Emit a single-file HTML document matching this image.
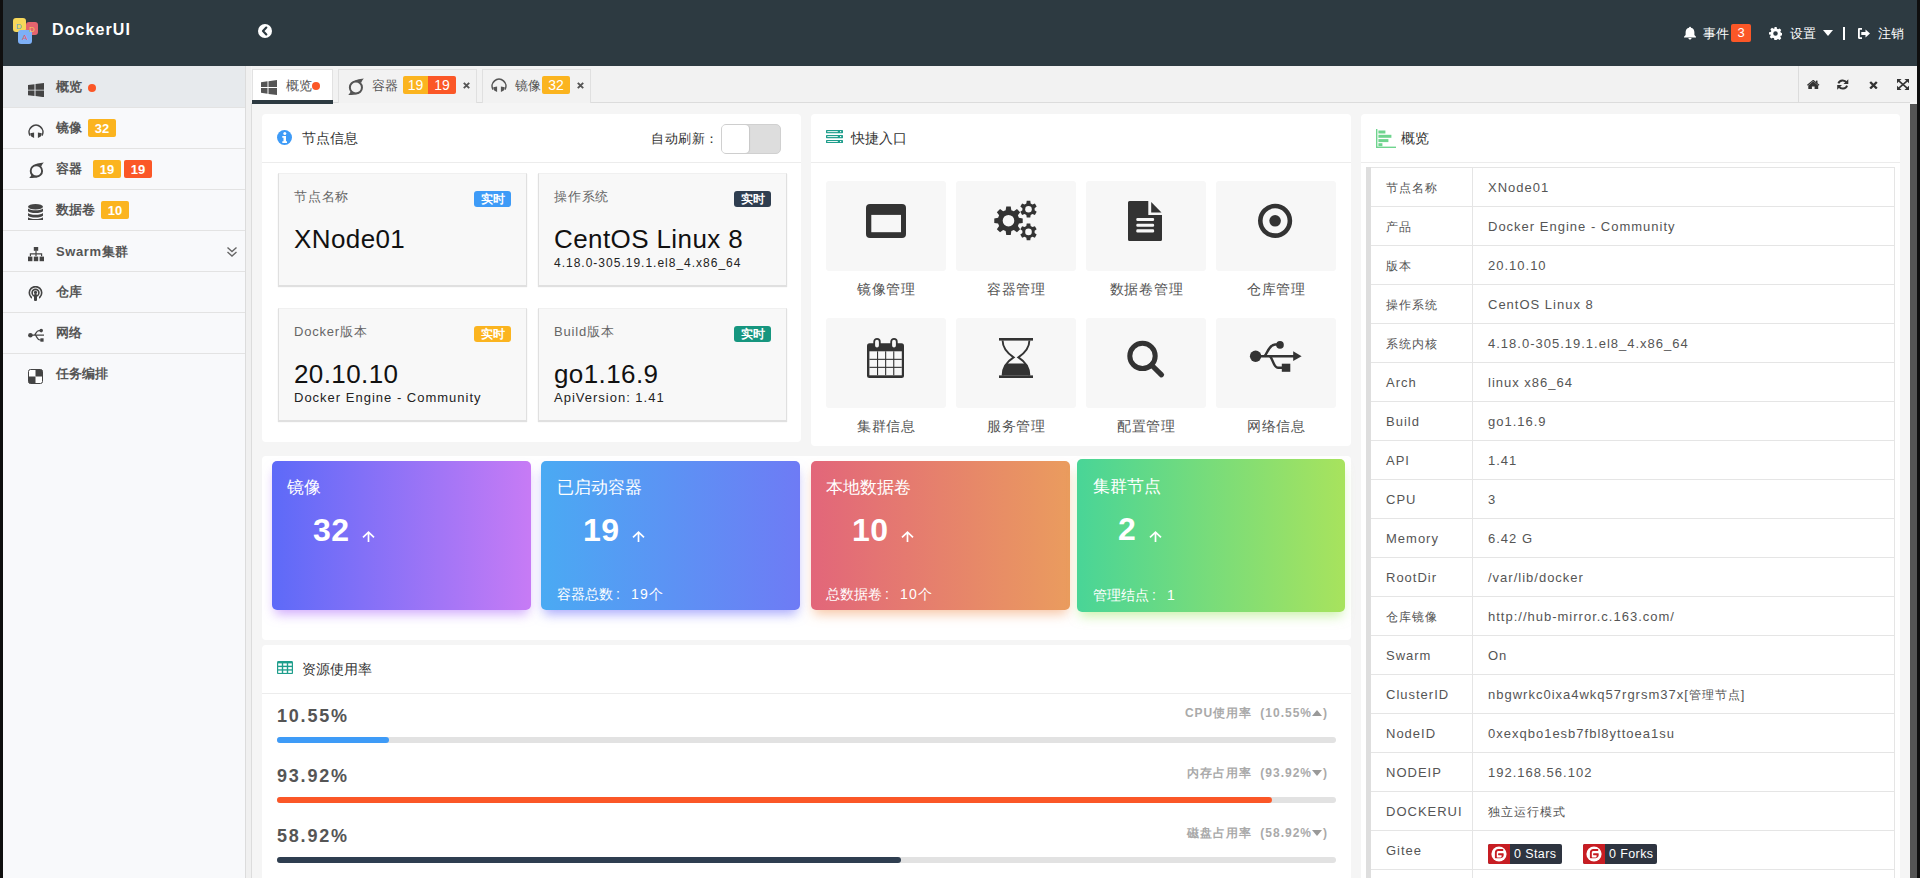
<!DOCTYPE html>
<html><head><meta charset="utf-8"><title>DockerUI</title>
<style>
*{box-sizing:border-box;margin:0;padding:0}
html,body{width:1920px;height:878px;overflow:hidden;background:#f5f5f5;font-family:"Liberation Sans",sans-serif;color:#333}
.a{position:absolute}
.t{position:absolute;white-space:nowrap}
.bd{position:absolute;color:#fff;font-weight:bold;text-align:center;border-radius:2px;font-family:"Liberation Sans",sans-serif}
</style></head><body>

<div class="a" style="left:0px;top:0px;width:3px;height:878px;background:#0f0f0f"></div>
<div class="a" style="left:1917px;top:0px;width:3px;height:878px;background:#0f0f0f"></div>
<div class="a" style="left:3px;top:0px;width:1914px;height:66px;background:#2d3a41"></div>
<div class="a" style="left:13px;top:18px;width:13px;height:14px;background:#f6d75a;border-radius:3px"></div>
<div class="a" style="left:26px;top:22px;width:12px;height:13px;background:#e5646e;border-radius:3px"></div>
<div class="a" style="left:18px;top:30px;width:14px;height:14px;background:#7db0f7;border-radius:3px"></div>
<div class="t " style="left:16px;top:22.70px;font-size:8px;line-height:8px;color:#5aa0c8;font-weight:normal;letter-spacing:0px;">D</div>
<div class="t " style="left:29px;top:26.20px;font-size:8px;line-height:8px;color:#f3cf5a;font-weight:normal;letter-spacing:0px;">D</div>
<div class="t " style="left:22px;top:34.20px;font-size:8px;line-height:8px;color:#e0606a;font-weight:normal;letter-spacing:0px;">A</div>
<div class="t " style="left:52px;top:21.90px;font-size:16px;line-height:16px;color:#fff;font-weight:bold;letter-spacing:1.1px;">DockerUI</div>
<svg class="a" style="left:258px;top:24px;" width="14" height="14" viewBox="0 0 14 14" preserveAspectRatio="none"><circle cx="7" cy="7" r="7" fill="#fff"/><path d="M8.3 3.6 L5 7 L8.3 10.4" stroke="#2d3a41" stroke-width="2.2" fill="none" stroke-linecap="round" stroke-linejoin="round"/></svg>
<svg class="a" style="left:1683px;top:26px;" width="14" height="14" viewBox="0 0 14 14" preserveAspectRatio="none"><path d="M7 0.8c.6 0 1 .4 1 .9 2.2.4 3.4 2.2 3.4 4.6v2.6l1.6 1.8v.9H1v-.9l1.6-1.8V6.3C2.6 3.9 3.8 2.1 6 1.7c0-.5.4-.9 1-.9z M5.4 12.1h3.2c0 .9-.7 1.5-1.6 1.5s-1.6-.6-1.6-1.5z" fill="#fff"/></svg>
<div class="t " style="left:1703px;top:26.95px;font-size:13px;line-height:13px;color:#fff;font-weight:normal;letter-spacing:0px;">事件</div>
<div class="bd" style="left:1731px;top:24px;width:20px;height:18px;line-height:18px;font-size:13px;font-weight:normal;background:#fb5727">3</div>
<svg class="a" style="left:1769px;top:27px;" width="13" height="13" viewBox="0 0 16 16" preserveAspectRatio="none"><path fill="#fff" d="M6.6 0h2.8l.4 2.2c.5.2 1 .4 1.4.7l1.9-1.2 2 2-1.2 1.9c.3.4.5.9.7 1.4l2.2.4v2.8l-2.2.4c-.2.5-.4 1-.7 1.4l1.2 1.9-2 2-1.9-1.2c-.4.3-.9.5-1.4.7L9.4 16H6.6l-.4-2.2c-.5-.2-1-.4-1.4-.7l-1.9 1.2-2-2 1.2-1.9c-.3-.4-.5-.9-.7-1.4L0 9.4V6.6l2.2-.4c.2-.5.4-1 .7-1.4L1.7 2.9l2-2 1.9 1.2c.4-.3.9-.5 1.4-.7zM8 5.2A2.8 2.8 0 1 0 8 10.8 2.8 2.8 0 1 0 8 5.2z"/></svg>
<div class="t " style="left:1790px;top:26.95px;font-size:13px;line-height:13px;color:#fff;font-weight:normal;letter-spacing:0px;">设置</div>
<svg class="a" style="left:1823px;top:30px;" width="10" height="6" viewBox="0 0 10 6" preserveAspectRatio="none"><path d="M0 0h10L5 6z" fill="#fff"/></svg>
<div class="a" style="left:1843px;top:27px;width:2px;height:13px;background:#fff"></div>
<svg class="a" style="left:1857px;top:27px;" width="14" height="13" viewBox="0 0 14 13" preserveAspectRatio="none"><path fill="#fff" d="M5 1H2.2C1.5 1 1 1.5 1 2.2v8.6c0 .7.5 1.2 1.2 1.2H5v-1.8H2.8V2.8H5z M8.5 2.5v2.6H4.3v2.8h4.2v2.6L13 6.5z"/></svg>
<div class="t " style="left:1878px;top:26.95px;font-size:13px;line-height:13px;color:#fff;font-weight:normal;letter-spacing:0px;">注销</div>
<div class="a" style="left:3px;top:66px;width:242px;height:812px;background:#f8f9fb"></div>
<div class="a" style="left:245px;top:66px;width:1px;height:812px;background:#dcdcdc"></div>
<div class="a" style="left:246px;top:66px;width:5px;height:812px;background:#f0f0f0"></div>
<div class="a" style="left:251px;top:103px;width:1px;height:775px;background:#dcdcdc"></div>
<div class="a" style="left:3px;top:66px;width:242px;height:41px;background:#e7eaed"></div>
<div class="a" style="left:3px;top:107px;width:242px;height:1px;background:#e3e3e3"></div>
<div class="a" style="left:3px;top:148px;width:242px;height:1px;background:#e3e3e3"></div>
<div class="a" style="left:3px;top:189px;width:242px;height:1px;background:#e3e3e3"></div>
<div class="a" style="left:3px;top:230px;width:242px;height:1px;background:#e3e3e3"></div>
<div class="a" style="left:3px;top:271px;width:242px;height:1px;background:#e3e3e3"></div>
<div class="a" style="left:3px;top:312px;width:242px;height:1px;background:#e3e3e3"></div>
<div class="a" style="left:3px;top:353px;width:242px;height:1px;background:#e3e3e3"></div>
<svg class="a" style="left:28px;top:82.5px;" width="16" height="14.2" viewBox="0 0 16 16" preserveAspectRatio="none"><path fill="#444" d="M0 2.3L6.5 1.4V7.5H0z M7.5 1.2L16 0V7.5H7.5z M0 8.5H6.5V14.6L0 13.7z M7.5 8.5H16V16L7.5 14.8z"/></svg>
<div class="t " style="left:56px;top:81.38px;font-size:12.5px;line-height:12.5px;color:#555;font-weight:bold;letter-spacing:0px;">概览</div>
<div class="a" style="left:88px;top:84px;width:8px;height:8px;background:#fb5727;border-radius:50%"></div>
<svg class="a" style="left:28px;top:122.5px;" width="16" height="16" viewBox="0 0 16 16" preserveAspectRatio="none"><path fill="none" stroke="#444" stroke-width="1.6" d="M2.1 12.6 A6.9 6.9 0 1 1 13.9 12.6"/><path fill="#444" d="M2.2 10.2 L6.1 9.4 L6.1 15 L3.2 13.6z M13.8 10.2 L9.9 9.4 L9.9 15 L12.8 13.6z"/></svg>
<div class="t " style="left:56px;top:122.38px;font-size:12.5px;line-height:12.5px;color:#555;font-weight:bold;letter-spacing:0px;">镜像</div>
<div class="bd" style="left:88px;top:119px;width:28px;height:18px;line-height:19px;font-size:13px;background:#fbb41f">32</div>
<svg class="a" style="left:28px;top:162px;" width="16" height="16" viewBox="0 0 16 16" preserveAspectRatio="none"><ellipse cx="8.4" cy="8.9" rx="5.7" ry="5.6" fill="none" stroke="#444" stroke-width="1.9"/><path d="M4.6 4.6 C7 1.6 11.5 0.9 15.8 0.5 C14.8 1.6 13.8 3 13.2 4.6 C11.5 3 8.5 2.6 4.6 4.6z" fill="#444"/><path d="M12.2 13.2 C9.8 16 5.2 16.1 1.2 16 C2.2 15 3 13.8 3.6 12.4 C5.6 14.4 9 14.6 12.2 13.2z" fill="#444"/></svg>
<div class="t " style="left:56px;top:163.38px;font-size:12.5px;line-height:12.5px;color:#555;font-weight:bold;letter-spacing:0px;">容器</div>
<div class="bd" style="left:93px;top:160px;width:28px;height:18px;line-height:19px;font-size:13px;background:#fbb41f">19</div>
<div class="bd" style="left:124px;top:160px;width:28px;height:18px;line-height:19px;font-size:13px;background:#fb5727">19</div>
<svg class="a" style="left:28px;top:204px;" width="15" height="16" viewBox="0 0 15 16" preserveAspectRatio="none"><ellipse cx="7.5" cy="2.8" rx="7.5" ry="2.8" fill="#444"/><path d="M0 4.4c1 1.2 4 1.8 7.5 1.8s6.5-.6 7.5-1.8v2.9c-1 1.2-4 1.8-7.5 1.8S1 8.5 0 7.3z" fill="#444"/><path d="M0 8.9c1 1.2 4 1.8 7.5 1.8s6.5-.6 7.5-1.8v2.9c-1 1.2-4 1.8-7.5 1.8S1 13 0 11.8z" fill="#444"/><path d="M0 13.2c1 1.2 4 1.8 7.5 1.8s6.5-.6 7.5-1.8V16H0z" fill="#444"/></svg>
<div class="t " style="left:56px;top:204.38px;font-size:12.5px;line-height:12.5px;color:#555;font-weight:bold;letter-spacing:0px;">数据卷</div>
<div class="bd" style="left:101px;top:201px;width:28px;height:18px;line-height:19px;font-size:13px;background:#fbb41f">10</div>
<svg class="a" style="left:28px;top:247px;" width="16" height="15" viewBox="0 0 16 15" preserveAspectRatio="none"><rect x="5.8" y="0" width="4.4" height="3.8" fill="#444"/><path d="M7.4 3.8h1.2v2.4h5.6v3h-1.2V7.4H8.6v1.8H7.4V7.4H3v1.8H1.8v-3h5.6z" fill="#444"/><rect x="0" y="9.6" width="4.4" height="4.6" fill="#444"/><rect x="5.8" y="9.6" width="4.4" height="4.6" fill="#444"/><rect x="11.6" y="9.6" width="4.4" height="4.6" fill="#444"/></svg>
<div class="t " style="left:56px;top:244.95px;font-size:13px;line-height:13px;color:#555;font-weight:bold;letter-spacing:0.6px;">Swarm<span style="font-size:12.5px">集群</span></div>
<svg class="a" style="left:226px;top:246px;" width="12" height="12" viewBox="0 0 12 12" preserveAspectRatio="none"><path d="M1.5 1.5L6 5.5L10.5 1.5 M1.5 6L6 10L10.5 6" stroke="#666" stroke-width="1.4" fill="none"/></svg>
<svg class="a" style="left:28px;top:286px;" width="15" height="15" viewBox="0 0 15 15" preserveAspectRatio="none"><circle cx="7.5" cy="6.8" r="6.2" fill="none" stroke="#444" stroke-width="1.6"/><circle cx="7.5" cy="6.8" r="3.4" fill="none" stroke="#444" stroke-width="1.6"/><circle cx="7.5" cy="6.4" r="1.6" fill="#444"/><rect x="6.2" y="8" width="2.6" height="7" rx="1" fill="#444"/><rect x="4" y="11" width="7" height="4" fill="#f8f9fb"/><rect x="6" y="8.5" width="3" height="6.5" rx="1" fill="#444"/></svg>
<div class="t " style="left:56px;top:286.38px;font-size:12.5px;line-height:12.5px;color:#555;font-weight:bold;letter-spacing:0px;">仓库</div>
<svg class="a" style="left:28px;top:328px;" width="16" height="14" viewBox="0 0 16 14" preserveAspectRatio="none"><circle cx="2.4" cy="7.2" r="2.3" fill="#444"/><path d="M4 7.2H16 M6.5 7.2C8 5.5 8.5 2.6 11 2.6H12.5 M7.5 7.2C9 9 9.5 12 12 12H13" stroke="#444" stroke-width="1.2" fill="none"/><circle cx="13.2" cy="2.6" r="1.8" fill="#444"/><rect x="12.4" y="10.3" width="3.2" height="3.4" fill="#444"/></svg>
<div class="t " style="left:56px;top:327.38px;font-size:12.5px;line-height:12.5px;color:#555;font-weight:bold;letter-spacing:0px;">网络</div>
<svg class="a" style="left:28px;top:369px;" width="15" height="15" viewBox="0 0 15 15" preserveAspectRatio="none"><rect x="0.5" y="0.5" width="14" height="14" rx="2" fill="#fff" stroke="#444" stroke-width="1"/><path d="M7.5 0.5H12.5a2 2 0 0 1 2 2V7.5H7.5z" fill="#444"/><path d="M0.5 7.5H7.5V14.5H2.5a2 2 0 0 1-2-2z" fill="#444"/></svg>
<div class="t " style="left:56px;top:368.38px;font-size:12.5px;line-height:12.5px;color:#555;font-weight:bold;letter-spacing:0px;">任务编排</div>
<div class="a" style="left:252px;top:66px;width:1665px;height:36px;background:#f2f2f2"></div>
<div class="a" style="left:252px;top:102px;width:1658px;height:1px;background:#dcdcdc"></div>
<div class="a" style="left:252px;top:69px;width:81px;height:34px;background:#fff;border:1px solid #e2e2e2;border-bottom:none"></div>
<div class="a" style="left:252px;top:100px;width:81px;height:4px;background:#2d3a41"></div>
<svg class="a" style="left:261px;top:80px;" width="16" height="15" viewBox="0 0 16 16" preserveAspectRatio="none"><path fill="#555" d="M0 2.3L6.5 1.4V7.5H0z M7.5 1.2L16 0V7.5H7.5z M0 8.5H6.5V14.6L0 13.7z M7.5 8.5H16V16L7.5 14.8z"/></svg>
<div class="t " style="left:286px;top:78.95px;font-size:13px;line-height:13px;color:#555;font-weight:normal;letter-spacing:0px;">概览</div>
<div class="a" style="left:312px;top:82px;width:8px;height:8px;background:#fb5727;border-radius:50%"></div>
<div class="a" style="left:338px;top:69px;width:139px;height:34px;background:#f2f2f2;border:1px solid #e0e0e0;border-bottom:none"></div>
<svg class="a" style="left:347px;top:77.5px;" width="17" height="17" viewBox="0 0 16 16" preserveAspectRatio="none"><ellipse cx="8.4" cy="8.9" rx="5.7" ry="5.6" fill="none" stroke="#555" stroke-width="1.9"/><path d="M4.6 4.6 C7 1.6 11.5 0.9 15.8 0.5 C14.8 1.6 13.8 3 13.2 4.6 C11.5 3 8.5 2.6 4.6 4.6z" fill="#555"/><path d="M12.2 13.2 C9.8 16 5.2 16.1 1.2 16 C2.2 15 3 13.8 3.6 12.4 C5.6 14.4 9 14.6 12.2 13.2z" fill="#555"/></svg>
<div class="t " style="left:372px;top:78.75px;font-size:13px;line-height:13px;color:#555;font-weight:normal;letter-spacing:0px;">容器</div>
<div class="bd" style="left:403px;top:76px;width:25px;height:18px;line-height:18px;font-size:14px;font-weight:normal;border-radius:2px 0 0 2px;background:#fbb41f">19</div>
<div class="bd" style="left:428px;top:76px;width:28px;height:18px;line-height:18px;font-size:14px;font-weight:normal;border-radius:0 2px 2px 0;background:#fb5727">19</div>
<svg class="a" style="left:462.5px;top:81.5px;" width="7" height="7" viewBox="0 0 7 7" preserveAspectRatio="none"><path d="M0.8 0.8L6.2 6.2M6.2 0.8L0.8 6.2" stroke="#555" stroke-width="1.9"/></svg>
<div class="a" style="left:482px;top:69px;width:109px;height:34px;background:#f2f2f2;border:1px solid #e0e0e0;border-bottom:none"></div>
<svg class="a" style="left:491px;top:77px;" width="16" height="16" viewBox="0 0 16 16" preserveAspectRatio="none"><path fill="none" stroke="#555" stroke-width="1.6" d="M2.1 12.6 A6.9 6.9 0 1 1 13.9 12.6"/><path fill="#555" d="M2.2 10.2 L6.1 9.4 L6.1 15 L3.2 13.6z M13.8 10.2 L9.9 9.4 L9.9 15 L12.8 13.6z"/></svg>
<div class="t " style="left:515px;top:78.75px;font-size:13px;line-height:13px;color:#555;font-weight:normal;letter-spacing:0px;">镜像</div>
<div class="bd" style="left:542px;top:76px;width:28px;height:18px;line-height:18px;font-size:14px;font-weight:normal;background:#fbb41f">32</div>
<svg class="a" style="left:576.5px;top:81.5px;" width="7" height="7" viewBox="0 0 7 7" preserveAspectRatio="none"><path d="M0.8 0.8L6.2 6.2M6.2 0.8L0.8 6.2" stroke="#555" stroke-width="1.9"/></svg>
<div class="a" style="left:1798px;top:66px;width:1px;height:37px;background:#dcdcdc"></div>
<svg class="a" style="left:1807px;top:79.5px;" width="12.5" height="9.5" viewBox="0 0 12.5 9.5" preserveAspectRatio="none"><path fill="#333" d="M6.25 1.2L11.2 5.4V9.5H7.6V6.6H4.9V9.5H1.3V5.4z"/><path d="M0.4 5.2L6.25 0.4L12.1 5.2" stroke="#333" stroke-width="1.1" fill="none"/><rect x="9" y="0.6" width="1.5" height="2.6" fill="#333"/></svg>
<svg class="a" style="left:1837px;top:79px;" width="11.5" height="11" viewBox="0 0 11.5 11" preserveAspectRatio="none"><path d="M9.6 3.6A4.6 4.6 0 0 0 1.4 4.4 M1.9 7.4A4.6 4.6 0 0 0 10.1 6.6" stroke="#333" stroke-width="1.9" fill="none"/><path d="M11.3 0.2V5H6.5z M0.2 10.8V6H5z" fill="#333"/></svg>
<svg class="a" style="left:1868.5px;top:80.5px;" width="9" height="8.5" viewBox="0 0 9 8.5" preserveAspectRatio="none"><path d="M1.2 1L7.8 7.5M7.8 1L1.2 7.5" stroke="#333" stroke-width="2.4"/></svg>
<svg class="a" style="left:1896.5px;top:79px;" width="12" height="11" viewBox="0 0 12 11" preserveAspectRatio="none"><path d="M1.8 1.8L10.2 9.2M10.2 1.8L1.8 9.2" stroke="#333" stroke-width="1.6"/><path d="M0 0H4.6L0 4.2z M12 0V4.2L7.4 0z M0 11V6.8L4.6 11z M12 11H7.4L12 6.8z" fill="#333"/></svg>
<div class="a" style="left:1910px;top:104px;width:7px;height:774px;background:#555"></div>
<div class="a" style="left:262px;top:114px;width:539px;height:328px;background:#fff;border-radius:4px"></div>
<div class="a" style="left:262px;top:162px;width:539px;height:1px;background:#ececec"></div>
<svg class="a" style="left:277px;top:130px;" width="15" height="15" viewBox="0 0 15 15" preserveAspectRatio="none"><circle cx="7.5" cy="7.5" r="7.5" fill="#3e9bf7"/><circle cx="7.8" cy="3.6" r="1.5" fill="#fff"/><path d="M5.3 6.1H9v5.2h1v1.6H5.3v-1.6h1.2V7.7H5.3z" fill="#fff"/></svg>
<div class="t " style="left:302px;top:131.10px;font-size:14px;line-height:14px;color:#333;font-weight:normal;letter-spacing:0px;">节点信息</div>
<div class="t " style="left:651px;top:131.95px;font-size:13px;line-height:13px;color:#333;font-weight:normal;letter-spacing:0.5px;">自动刷新：</div>
<div class="a" style="left:721px;top:124px;width:60px;height:30px;background:#ddd;border:1px solid #d0d0d0;border-radius:5px"></div>
<div class="a" style="left:722px;top:125px;width:27px;height:28px;background:#fff;border-radius:4px;box-shadow:1px 0 1px rgba(0,0,0,.1)"></div>
<div class="a" style="left:278px;top:173px;width:249px;height:113px;background:#f8f8f8;border:1px solid #e0e0e0;border-top-color:#f0f0f0;box-shadow:0 1px 1px rgba(0,0,0,.12)"></div>
<div class="t " style="left:294px;top:189.95px;font-size:13px;line-height:13px;color:#666;font-weight:normal;letter-spacing:0.8px;">节点名称</div>
<div class="bd" style="left:474px;top:191px;width:37px;height:16px;line-height:16px;font-size:12px;background:#3e9bf7;border-radius:3px">实时</div>
<div class="t " style="left:294px;top:225.90px;font-size:26px;line-height:26px;color:#111;font-weight:normal;letter-spacing:0.4px;">XNode01</div>
<div class="a" style="left:538px;top:173px;width:249px;height:113px;background:#f8f8f8;border:1px solid #e0e0e0;border-top-color:#f0f0f0;box-shadow:0 1px 1px rgba(0,0,0,.12)"></div>
<div class="t " style="left:554px;top:189.95px;font-size:13px;line-height:13px;color:#666;font-weight:normal;letter-spacing:0.8px;">操作系统</div>
<div class="bd" style="left:734px;top:191px;width:37px;height:16px;line-height:16px;font-size:12px;background:#2f3e50;border-radius:3px">实时</div>
<div class="t " style="left:554px;top:225.90px;font-size:26px;line-height:26px;color:#111;font-weight:normal;letter-spacing:0.4px;">CentOS Linux 8</div>
<div class="t " style="left:554px;top:256.80px;font-size:12px;line-height:12px;color:#222;font-weight:normal;letter-spacing:1px;">4.18.0-305.19.1.el8_4.x86_64</div>
<div class="a" style="left:278px;top:308px;width:249px;height:113px;background:#f8f8f8;border:1px solid #e0e0e0;border-top-color:#f0f0f0;box-shadow:0 1px 1px rgba(0,0,0,.12)"></div>
<div class="t " style="left:294px;top:324.95px;font-size:13px;line-height:13px;color:#666;font-weight:normal;letter-spacing:0.8px;">Docker版本</div>
<div class="bd" style="left:474px;top:326px;width:37px;height:16px;line-height:16px;font-size:12px;background:#fbb41f;border-radius:3px">实时</div>
<div class="t " style="left:294px;top:360.90px;font-size:26px;line-height:26px;color:#111;font-weight:normal;letter-spacing:0.4px;">20.10.10</div>
<div class="t " style="left:294px;top:390.95px;font-size:13px;line-height:13px;color:#222;font-weight:normal;letter-spacing:1px;">Docker Engine - Community</div>
<div class="a" style="left:538px;top:308px;width:249px;height:113px;background:#f8f8f8;border:1px solid #e0e0e0;border-top-color:#f0f0f0;box-shadow:0 1px 1px rgba(0,0,0,.12)"></div>
<div class="t " style="left:554px;top:324.95px;font-size:13px;line-height:13px;color:#666;font-weight:normal;letter-spacing:0.8px;">Build版本</div>
<div class="bd" style="left:734px;top:326px;width:37px;height:16px;line-height:16px;font-size:12px;background:#16967f;border-radius:3px">实时</div>
<div class="t " style="left:554px;top:360.90px;font-size:26px;line-height:26px;color:#111;font-weight:normal;letter-spacing:0.4px;">go1.16.9</div>
<div class="t " style="left:554px;top:390.95px;font-size:13px;line-height:13px;color:#222;font-weight:normal;letter-spacing:1px;">ApiVersion: 1.41</div>
<div class="a" style="left:811px;top:114px;width:540px;height:332px;background:#fff;border-radius:4px"></div>
<div class="a" style="left:811px;top:162px;width:540px;height:1px;background:#ececec"></div>
<svg class="a" style="left:826px;top:130px;" width="17" height="13" viewBox="0 0 17 13" preserveAspectRatio="none"><rect x="0" y="0" width="17" height="3.2" rx="0.6" fill="#1f9e8c"/><rect x="1.3" y="1.2" width="10.5" height="0.9" fill="#fff"/><rect x="14" y="1.1" width="1.2" height="1.1" fill="#fff"/><rect x="0" y="4.95" width="17" height="3.2" rx="0.6" fill="#1f9e8c"/><rect x="1.3" y="6.15" width="10.5" height="0.9" fill="#fff"/><rect x="14" y="6.050000000000001" width="1.2" height="1.1" fill="#fff"/><rect x="0" y="9.9" width="17" height="3.2" rx="0.6" fill="#1f9e8c"/><rect x="1.3" y="11.1" width="10.5" height="0.9" fill="#fff"/><rect x="14" y="11.0" width="1.2" height="1.1" fill="#fff"/></svg>
<div class="t " style="left:851px;top:131.10px;font-size:14px;line-height:14px;color:#333;font-weight:normal;letter-spacing:0px;">快捷入口</div>
<div class="a" style="left:826px;top:181px;width:120px;height:90px;background:#f7f7f7;border-radius:3px"></div>
<div class="t" style="left:686.4px;width:400px;text-align:center;top:282.10px;font-size:14px;line-height:14px;color:#555;font-weight:normal;letter-spacing:0.75px;">镜像管理</div>
<div class="a" style="left:956px;top:181px;width:120px;height:90px;background:#f7f7f7;border-radius:3px"></div>
<div class="t" style="left:816.4px;width:400px;text-align:center;top:282.10px;font-size:14px;line-height:14px;color:#555;font-weight:normal;letter-spacing:0.75px;">容器管理</div>
<div class="a" style="left:1086px;top:181px;width:120px;height:90px;background:#f7f7f7;border-radius:3px"></div>
<div class="t" style="left:946.4000000000001px;width:400px;text-align:center;top:282.10px;font-size:14px;line-height:14px;color:#555;font-weight:normal;letter-spacing:0.75px;">数据卷管理</div>
<div class="a" style="left:1216px;top:181px;width:120px;height:90px;background:#f7f7f7;border-radius:3px"></div>
<div class="t" style="left:1076.4px;width:400px;text-align:center;top:282.10px;font-size:14px;line-height:14px;color:#555;font-weight:normal;letter-spacing:0.75px;">仓库管理</div>
<div class="a" style="left:826px;top:318px;width:120px;height:90px;background:#f7f7f7;border-radius:3px"></div>
<div class="t" style="left:686.4px;width:400px;text-align:center;top:419.10px;font-size:14px;line-height:14px;color:#555;font-weight:normal;letter-spacing:0.75px;">集群信息</div>
<div class="a" style="left:956px;top:318px;width:120px;height:90px;background:#f7f7f7;border-radius:3px"></div>
<div class="t" style="left:816.4px;width:400px;text-align:center;top:419.10px;font-size:14px;line-height:14px;color:#555;font-weight:normal;letter-spacing:0.75px;">服务管理</div>
<div class="a" style="left:1086px;top:318px;width:120px;height:90px;background:#f7f7f7;border-radius:3px"></div>
<div class="t" style="left:946.4000000000001px;width:400px;text-align:center;top:419.10px;font-size:14px;line-height:14px;color:#555;font-weight:normal;letter-spacing:0.75px;">配置管理</div>
<div class="a" style="left:1216px;top:318px;width:120px;height:90px;background:#f7f7f7;border-radius:3px"></div>
<div class="t" style="left:1076.4px;width:400px;text-align:center;top:419.10px;font-size:14px;line-height:14px;color:#555;font-weight:normal;letter-spacing:0.75px;">网络信息</div>
<svg class="a" style="left:866px;top:204px;" width="40" height="34" viewBox="0 0 40 34" preserveAspectRatio="none"><rect x="0" y="0" width="40" height="34" rx="4" fill="#333"/><rect x="5.3" y="10.9" width="29.7" height="17.3" fill="#f7f7f7"/></svg>
<svg class="a" style="left:990px;top:196px;" width="50" height="50" viewBox="0 0 50 50" preserveAspectRatio="none"><polygon points="15.65,14.28 16.25,10.48 20.75,10.48 21.35,14.28 23.85,15.32 26.96,13.05 30.15,16.24 27.88,19.35 28.92,21.85 32.72,22.45 32.72,26.95 28.92,27.55 27.88,30.05 30.15,33.16 26.96,36.35 23.85,34.08 21.35,35.12 20.75,38.92 16.25,38.92 15.65,35.12 13.15,34.08 10.04,36.35 6.85,33.16 9.12,30.05 8.08,27.55 4.28,26.95 4.28,22.45 8.08,21.85 9.12,19.35 6.85,16.24 10.04,13.05 13.15,15.32" fill="#333"/><circle cx="18.5" cy="24.7" r="5.8" fill="#f7f7f7"/><polygon points="36.34,7.39 36.71,4.79 40.29,4.79 40.66,7.39 42.45,8.42 44.89,7.45 46.68,10.54 44.61,12.17 44.61,14.23 46.68,15.86 44.89,18.95 42.45,17.98 40.66,19.01 40.29,21.61 36.71,21.61 36.34,19.01 34.55,17.98 32.11,18.95 30.32,15.86 32.39,14.23 32.39,12.17 30.32,10.54 32.11,7.45 34.55,8.42" fill="#333"/><circle cx="38.5" cy="13.2" r="3.3" fill="#f7f7f7"/><polygon points="36.34,30.09 36.71,27.49 40.29,27.49 40.66,30.09 42.45,31.12 44.89,30.15 46.68,33.24 44.61,34.87 44.61,36.93 46.68,38.56 44.89,41.65 42.45,40.68 40.66,41.71 40.29,44.31 36.71,44.31 36.34,41.71 34.55,40.68 32.11,41.65 30.32,38.56 32.39,36.93 32.39,34.87 30.32,33.24 32.11,30.15 34.55,31.12" fill="#333"/><circle cx="38.5" cy="35.9" r="3.3" fill="#f7f7f7"/></svg>
<svg class="a" style="left:1128px;top:201px;" width="34" height="40" viewBox="0 0 34 40" preserveAspectRatio="none"><path d="M0 1.5A1.5 1.5 0 0 1 1.5 0H20.3V14H34V38.5A1.5 1.5 0 0 1 32.5 40H1.5A1.5 1.5 0 0 1 0 38.5z" fill="#333"/><path d="M23.2 1L33.5 11.4H23.2z" fill="#333"/><rect x="8.3" y="16.9" width="17.8" height="3.1" rx="1.2" fill="#f7f7f7"/><rect x="8.3" y="22.7" width="17.8" height="3.1" rx="1.2" fill="#f7f7f7"/><rect x="8.3" y="28.3" width="17.8" height="3.1" rx="1.2" fill="#f7f7f7"/></svg>
<svg class="a" style="left:1257px;top:203px;" width="36" height="36" viewBox="0 0 36 36" preserveAspectRatio="none"><circle cx="18.1" cy="17.8" r="14.8" fill="none" stroke="#333" stroke-width="4.6"/><circle cx="18.1" cy="17.8" r="5.8" fill="#333"/></svg>
<svg class="a" style="left:867px;top:338px;" width="37" height="40" viewBox="0 0 37 40" preserveAspectRatio="none"><rect x="0" y="5.2" width="37" height="34.8" rx="2.5" fill="#333"/><rect x="2.4" y="13.3" width="32.4" height="24" fill="#f7f7f7"/><rect x="10.00" y="13.3" width="1.1" height="24" fill="#333"/><rect x="18.10" y="13.3" width="1.1" height="24" fill="#333"/><rect x="26.20" y="13.3" width="1.1" height="24" fill="#333"/><rect x="2.4" y="20.80" width="32.4" height="1.1" fill="#333"/><rect x="2.4" y="28.80" width="32.4" height="1.1" fill="#333"/><rect x="7.2" y="0.9" width="5.6" height="9.4" rx="2.8" fill="#f7f7f7" stroke="#333" stroke-width="1.8"/><rect x="24.2" y="0.9" width="5.6" height="9.4" rx="2.8" fill="#f7f7f7" stroke="#333" stroke-width="1.8"/></svg>
<svg class="a" style="left:999px;top:338px;" width="34" height="40" viewBox="0 0 34 40" preserveAspectRatio="none"><rect x="0" y="0" width="34" height="2.6" fill="#333"/><rect x="0" y="37.4" width="34" height="2.6" fill="#333"/><path d="M3.6 2.6C3.6 10 8 15 14.6 19.4 8 23.6 3.6 29 3.6 37.4 M30.4 2.6C30.4 10 26 15 19.4 19.4 26 23.6 30.4 29 30.4 37.4" stroke="#333" stroke-width="1.9" fill="none"/><path d="M7.4 25.6H26.6C29 28.4 30.4 32 30.4 37.4H3.6C3.6 32 5 28.4 7.4 25.6z" fill="#333"/></svg>
<svg class="a" style="left:1126px;top:340px;" width="40" height="40" viewBox="0 0 40 40" preserveAspectRatio="none"><circle cx="16.5" cy="15.9" r="12.7" fill="none" stroke="#333" stroke-width="5"/><path d="M25.5 25L35.5 34.8" stroke="#333" stroke-width="5.2" stroke-linecap="round"/></svg>
<svg class="a" style="left:1249px;top:339px;" width="54" height="34" viewBox="0 0 54 34" preserveAspectRatio="none"><circle cx="6.6" cy="17.2" r="5.7" fill="#333"/><path d="M6 17.2H45" stroke="#333" stroke-width="2.5"/><path d="M52.6 17.2L44.2 12.3V22.1z" fill="#333"/><path d="M15.5 17.2C18.5 14.5 19.5 6 26 5.6H29 M21 17.2C24 20 24.5 28.8 29 28.8H33.5" stroke="#333" stroke-width="2.5" fill="none"/><circle cx="31" cy="5.9" r="3.8" fill="#333"/><rect x="32.8" y="24.7" width="8.5" height="8.1" fill="#333"/></svg>
<div class="a" style="left:262px;top:456px;width:1089px;height:184px;background:#fff;border-radius:4px"></div>
<div class="a" style="left:272px;top:461px;width:259px;height:149px;background:linear-gradient(90deg,#5d6af8,#c77bf5);border-radius:5px;box-shadow:0 7px 12px -3px rgba(175,110,250,.6)"></div>
<div class="a" style="left:541px;top:461px;width:259px;height:149px;background:linear-gradient(90deg,#4aaaf3,#6e7bf5);border-radius:5px;box-shadow:0 7px 12px -3px rgba(110,110,250,.6)"></div>
<div class="a" style="left:811px;top:461px;width:259px;height:149px;background:linear-gradient(90deg,#e2667a,#ea9c5e);border-radius:5px;box-shadow:0 7px 12px -3px rgba(240,150,90,.55)"></div>
<div class="a" style="left:1077px;top:459px;width:268px;height:153px;background:linear-gradient(90deg,#49d597,#a8e35d);border-radius:5px;box-shadow:0 7px 12px -3px rgba(160,230,100,.55)"></div>
<div class="t " style="left:287px;top:479.48px;font-size:16.5px;line-height:16.5px;color:#fff;font-weight:normal;letter-spacing:0px;">镜像</div>
<div class="t " style="left:313px;top:514.30px;font-size:32px;line-height:32px;color:#fff;font-weight:bold;letter-spacing:0.5px;">32</div>
<svg class="a" style="left:362px;top:531px;" width="13" height="11" viewBox="0 0 13 11" preserveAspectRatio="none"><path d="M6.5 1.2V11 M1 6.4L6.5 1.2L12 6.4" stroke="#fff" stroke-width="1.7" fill="none"/></svg>
<div class="t " style="left:557px;top:479.48px;font-size:16.5px;line-height:16.5px;color:#fff;font-weight:normal;letter-spacing:0px;">已启动容器</div>
<div class="t " style="left:583px;top:514.30px;font-size:32px;line-height:32px;color:#fff;font-weight:bold;letter-spacing:0.5px;">19</div>
<svg class="a" style="left:632px;top:531px;" width="13" height="11" viewBox="0 0 13 11" preserveAspectRatio="none"><path d="M6.5 1.2V11 M1 6.4L6.5 1.2L12 6.4" stroke="#fff" stroke-width="1.7" fill="none"/></svg>
<div class="t " style="left:557px;top:587.10px;font-size:14px;line-height:14px;color:#fff;font-weight:normal;letter-spacing:0px;">容器总数<span style="display:inline-block;width:18px;padding-left:3px">:</span><span style="letter-spacing:1.3px">19个</span></div>
<div class="t " style="left:826px;top:479.48px;font-size:16.5px;line-height:16.5px;color:#fff;font-weight:normal;letter-spacing:0px;">本地数据卷</div>
<div class="t " style="left:852px;top:514.30px;font-size:32px;line-height:32px;color:#fff;font-weight:bold;letter-spacing:0.5px;">10</div>
<svg class="a" style="left:900.5px;top:531px;" width="13" height="11" viewBox="0 0 13 11" preserveAspectRatio="none"><path d="M6.5 1.2V11 M1 6.4L6.5 1.2L12 6.4" stroke="#fff" stroke-width="1.7" fill="none"/></svg>
<div class="t " style="left:826px;top:587.10px;font-size:14px;line-height:14px;color:#fff;font-weight:normal;letter-spacing:0px;">总数据卷<span style="display:inline-block;width:18px;padding-left:3px">:</span><span style="letter-spacing:1.3px">10个</span></div>
<div class="t " style="left:1093px;top:478.48px;font-size:16.5px;line-height:16.5px;color:#fff;font-weight:normal;letter-spacing:0px;">集群节点</div>
<div class="t " style="left:1118px;top:513.30px;font-size:32px;line-height:32px;color:#fff;font-weight:bold;letter-spacing:0.5px;">2</div>
<svg class="a" style="left:1148.5px;top:531px;" width="13" height="11" viewBox="0 0 13 11" preserveAspectRatio="none"><path d="M6.5 1.2V11 M1 6.4L6.5 1.2L12 6.4" stroke="#fff" stroke-width="1.7" fill="none"/></svg>
<div class="t " style="left:1093px;top:587.90px;font-size:14px;line-height:14px;color:#fff;font-weight:normal;letter-spacing:0px;">管理结点<span style="display:inline-block;width:18px;padding-left:3px">:</span><span style="letter-spacing:1.3px">1</span></div>
<div class="a" style="left:262px;top:645px;width:1089px;height:260px;background:#fff;border-radius:4px"></div>
<div class="a" style="left:262px;top:693px;width:1089px;height:1px;background:#ececec"></div>
<svg class="a" style="left:277px;top:660.6px;" width="16" height="13.2" viewBox="0 0 16 13.2" preserveAspectRatio="none"><rect x="0" y="0" width="16" height="13.2" rx="1.4" fill="#1f9e8c"/><rect x="1.2" y="2.4" width="3.6" height="2.3" fill="#fff"/><rect x="1.2" y="6.1" width="3.6" height="2.2" fill="#fff"/><rect x="1.2" y="9.6" width="3.6" height="2.3" fill="#fff"/><rect x="6.2" y="2.4" width="3.6" height="2.3" fill="#fff"/><rect x="6.2" y="6.1" width="3.6" height="2.2" fill="#fff"/><rect x="6.2" y="9.6" width="3.6" height="2.3" fill="#fff"/><rect x="11.2" y="2.4" width="3.6" height="2.3" fill="#fff"/><rect x="11.2" y="6.1" width="3.6" height="2.2" fill="#fff"/><rect x="11.2" y="9.6" width="3.6" height="2.3" fill="#fff"/></svg>
<div class="t " style="left:302px;top:662.10px;font-size:14px;line-height:14px;color:#333;font-weight:normal;letter-spacing:0px;">资源使用率</div>
<div class="t " style="left:277px;top:706.70px;font-size:18px;line-height:18px;color:#555;font-weight:bold;letter-spacing:1.8px;">10.55%</div>
<div class="t" style="right:592px;top:706.80px;font-size:12px;line-height:12px;color:#aaa;font-weight:bold;letter-spacing:1.0px;">CPU使用率<span style="display:inline-block;width:13px;text-align:right">(</span>10.55%<svg width="10" height="6" viewBox="0 0 10 6" style="margin:0 1px 1px 0"><path d="M0 6L5 0L10 6z" fill="#999"/></svg>)</div>
<div class="a" style="left:277px;top:737px;width:1059px;height:6px;background:#e2e2e2;border-radius:3px"></div>
<div class="a" style="left:277px;top:737px;width:111.7px;height:6px;background:#3e9bf7;border-radius:3px"></div>
<div class="t " style="left:277px;top:766.70px;font-size:18px;line-height:18px;color:#555;font-weight:bold;letter-spacing:1.8px;">93.92%</div>
<div class="t" style="right:592px;top:766.80px;font-size:12px;line-height:12px;color:#aaa;font-weight:bold;letter-spacing:1.0px;">内存占用率<span style="display:inline-block;width:13px;text-align:right">(</span>93.92%<svg width="10" height="6" viewBox="0 0 10 6" style="margin:0 1px 1px 0"><path d="M0 0L10 0L5 6z" fill="#999"/></svg>)</div>
<div class="a" style="left:277px;top:797px;width:1059px;height:6px;background:#e2e2e2;border-radius:3px"></div>
<div class="a" style="left:277px;top:797px;width:994.6px;height:6px;background:#fb5727;border-radius:3px"></div>
<div class="t " style="left:277px;top:826.70px;font-size:18px;line-height:18px;color:#555;font-weight:bold;letter-spacing:1.8px;">58.92%</div>
<div class="t" style="right:592px;top:826.80px;font-size:12px;line-height:12px;color:#aaa;font-weight:bold;letter-spacing:1.0px;">磁盘占用率<span style="display:inline-block;width:13px;text-align:right">(</span>58.92%<svg width="10" height="6" viewBox="0 0 10 6" style="margin:0 1px 1px 0"><path d="M0 0L10 0L5 6z" fill="#999"/></svg>)</div>
<div class="a" style="left:277px;top:857px;width:1059px;height:6px;background:#e2e2e2;border-radius:3px"></div>
<div class="a" style="left:277px;top:857px;width:624px;height:6px;background:#2f3e50;border-radius:3px"></div>
<div class="a" style="left:1361px;top:114px;width:539px;height:790px;background:#fff;border-radius:4px"></div>
<div class="a" style="left:1361px;top:162px;width:539px;height:1px;background:#ececec"></div>
<svg class="a" style="left:1376px;top:129px;" width="20" height="19" viewBox="0 0 20 19" preserveAspectRatio="none"><rect x="0" y="0" width="1.4" height="19" fill="#6fd48e"/><rect x="0" y="17.6" width="20" height="1.4" fill="#6fd48e"/><rect x="2.4" y="1.5" width="7" height="3" fill="#6fd48e"/><rect x="2.4" y="5.8" width="13" height="3" fill="#6fd48e"/><rect x="2.4" y="10.1" width="10" height="3" fill="#6fd48e"/><rect x="2.4" y="14.2" width="4" height="3" fill="#6fd48e"/></svg>
<div class="t " style="left:1401px;top:131.10px;font-size:14px;line-height:14px;color:#333;font-weight:normal;letter-spacing:0px;">概览</div>
<div class="a" style="left:1366px;top:167px;width:5px;height:711px;background:#dedede"></div>
<div class="a" style="left:1371px;top:167px;width:524px;height:720px;background:#fff;border:1px solid #e5e5e5;border-left:none"></div>
<div class="a" style="left:1472px;top:167px;width:1px;height:711px;background:#e5e5e5"></div>
<div class="t " style="left:1386px;top:180.95px;font-size:13px;line-height:13px;color:#555;font-weight:normal;letter-spacing:1px;"><span style="font-size:12px">节点名称</span></div>
<div class="t " style="left:1488px;top:180.95px;font-size:13px;line-height:13px;color:#555;font-weight:normal;letter-spacing:1px;">XNode01</div>
<div class="a" style="left:1371px;top:206px;width:524px;height:1px;background:#e5e5e5"></div>
<div class="t " style="left:1386px;top:219.95px;font-size:13px;line-height:13px;color:#555;font-weight:normal;letter-spacing:1px;"><span style="font-size:12px">产品</span></div>
<div class="t " style="left:1488px;top:219.95px;font-size:13px;line-height:13px;color:#555;font-weight:normal;letter-spacing:1px;">Docker Engine - Community</div>
<div class="a" style="left:1371px;top:245px;width:524px;height:1px;background:#e5e5e5"></div>
<div class="t " style="left:1386px;top:258.95px;font-size:13px;line-height:13px;color:#555;font-weight:normal;letter-spacing:1px;"><span style="font-size:12px">版本</span></div>
<div class="t " style="left:1488px;top:258.95px;font-size:13px;line-height:13px;color:#555;font-weight:normal;letter-spacing:1px;">20.10.10</div>
<div class="a" style="left:1371px;top:284px;width:524px;height:1px;background:#e5e5e5"></div>
<div class="t " style="left:1386px;top:297.95px;font-size:13px;line-height:13px;color:#555;font-weight:normal;letter-spacing:1px;"><span style="font-size:12px">操作系统</span></div>
<div class="t " style="left:1488px;top:297.95px;font-size:13px;line-height:13px;color:#555;font-weight:normal;letter-spacing:1px;">CentOS Linux 8</div>
<div class="a" style="left:1371px;top:323px;width:524px;height:1px;background:#e5e5e5"></div>
<div class="t " style="left:1386px;top:336.95px;font-size:13px;line-height:13px;color:#555;font-weight:normal;letter-spacing:1px;"><span style="font-size:12px">系统内核</span></div>
<div class="t " style="left:1488px;top:336.95px;font-size:13px;line-height:13px;color:#555;font-weight:normal;letter-spacing:1px;">4.18.0-305.19.1.el8_4.x86_64</div>
<div class="a" style="left:1371px;top:362px;width:524px;height:1px;background:#e5e5e5"></div>
<div class="t " style="left:1386px;top:375.95px;font-size:13px;line-height:13px;color:#555;font-weight:normal;letter-spacing:1px;">Arch</div>
<div class="t " style="left:1488px;top:375.95px;font-size:13px;line-height:13px;color:#555;font-weight:normal;letter-spacing:1px;">linux x86_64</div>
<div class="a" style="left:1371px;top:401px;width:524px;height:1px;background:#e5e5e5"></div>
<div class="t " style="left:1386px;top:414.95px;font-size:13px;line-height:13px;color:#555;font-weight:normal;letter-spacing:1px;">Build</div>
<div class="t " style="left:1488px;top:414.95px;font-size:13px;line-height:13px;color:#555;font-weight:normal;letter-spacing:1px;">go1.16.9</div>
<div class="a" style="left:1371px;top:440px;width:524px;height:1px;background:#e5e5e5"></div>
<div class="t " style="left:1386px;top:453.95px;font-size:13px;line-height:13px;color:#555;font-weight:normal;letter-spacing:1px;">API</div>
<div class="t " style="left:1488px;top:453.95px;font-size:13px;line-height:13px;color:#555;font-weight:normal;letter-spacing:1px;">1.41</div>
<div class="a" style="left:1371px;top:479px;width:524px;height:1px;background:#e5e5e5"></div>
<div class="t " style="left:1386px;top:492.95px;font-size:13px;line-height:13px;color:#555;font-weight:normal;letter-spacing:1px;">CPU</div>
<div class="t " style="left:1488px;top:492.95px;font-size:13px;line-height:13px;color:#555;font-weight:normal;letter-spacing:1px;">3</div>
<div class="a" style="left:1371px;top:518px;width:524px;height:1px;background:#e5e5e5"></div>
<div class="t " style="left:1386px;top:531.95px;font-size:13px;line-height:13px;color:#555;font-weight:normal;letter-spacing:1px;">Memory</div>
<div class="t " style="left:1488px;top:531.95px;font-size:13px;line-height:13px;color:#555;font-weight:normal;letter-spacing:1px;">6.42 G</div>
<div class="a" style="left:1371px;top:557px;width:524px;height:1px;background:#e5e5e5"></div>
<div class="t " style="left:1386px;top:570.95px;font-size:13px;line-height:13px;color:#555;font-weight:normal;letter-spacing:1px;">RootDir</div>
<div class="t " style="left:1488px;top:570.95px;font-size:13px;line-height:13px;color:#555;font-weight:normal;letter-spacing:1px;">/var/lib/docker</div>
<div class="a" style="left:1371px;top:596px;width:524px;height:1px;background:#e5e5e5"></div>
<div class="t " style="left:1386px;top:609.95px;font-size:13px;line-height:13px;color:#555;font-weight:normal;letter-spacing:1px;"><span style="font-size:12px">仓库镜像</span></div>
<div class="t " style="left:1488px;top:609.95px;font-size:13px;line-height:13px;color:#555;font-weight:normal;letter-spacing:1px;">http://hub-mirror.c.163.com/</div>
<div class="a" style="left:1371px;top:635px;width:524px;height:1px;background:#e5e5e5"></div>
<div class="t " style="left:1386px;top:648.95px;font-size:13px;line-height:13px;color:#555;font-weight:normal;letter-spacing:1px;">Swarm</div>
<div class="t " style="left:1488px;top:648.95px;font-size:13px;line-height:13px;color:#555;font-weight:normal;letter-spacing:1px;">On</div>
<div class="a" style="left:1371px;top:674px;width:524px;height:1px;background:#e5e5e5"></div>
<div class="t " style="left:1386px;top:687.95px;font-size:13px;line-height:13px;color:#555;font-weight:normal;letter-spacing:1px;">ClusterID</div>
<div class="t " style="left:1488px;top:687.95px;font-size:13px;line-height:13px;color:#555;font-weight:normal;letter-spacing:1px;">nbgwrkc0ixa4wkq57rgrsm37x[<span style="font-size:12px">管理节点</span>]</div>
<div class="a" style="left:1371px;top:713px;width:524px;height:1px;background:#e5e5e5"></div>
<div class="t " style="left:1386px;top:726.95px;font-size:13px;line-height:13px;color:#555;font-weight:normal;letter-spacing:1px;">NodeID</div>
<div class="t " style="left:1488px;top:726.95px;font-size:13px;line-height:13px;color:#555;font-weight:normal;letter-spacing:1px;">0xexqbo1esb7fbl8yttoea1su</div>
<div class="a" style="left:1371px;top:752px;width:524px;height:1px;background:#e5e5e5"></div>
<div class="t " style="left:1386px;top:765.95px;font-size:13px;line-height:13px;color:#555;font-weight:normal;letter-spacing:1px;">NODEIP</div>
<div class="t " style="left:1488px;top:765.95px;font-size:13px;line-height:13px;color:#555;font-weight:normal;letter-spacing:1px;">192.168.56.102</div>
<div class="a" style="left:1371px;top:791px;width:524px;height:1px;background:#e5e5e5"></div>
<div class="t " style="left:1386px;top:804.95px;font-size:13px;line-height:13px;color:#555;font-weight:normal;letter-spacing:1px;">DOCKERUI</div>
<div class="t " style="left:1488px;top:804.95px;font-size:13px;line-height:13px;color:#555;font-weight:normal;letter-spacing:1px;"><span style="font-size:12px">独立运行模式</span></div>
<div class="a" style="left:1371px;top:830px;width:524px;height:1px;background:#e5e5e5"></div>
<div class="t " style="left:1386px;top:843.95px;font-size:13px;line-height:13px;color:#555;font-weight:normal;letter-spacing:1px;">Gitee</div>
<div class="a" style="left:1371px;top:869px;width:524px;height:1px;background:#e5e5e5"></div>
<div class="t " style="left:1386px;top:882.95px;font-size:13px;line-height:13px;color:#555;font-weight:normal;letter-spacing:1px;"></div>
<div class="a" style="left:1488px;top:844px;width:74px;height:20px;background:#2e3440;border-radius:2px;overflow:hidden"><div class="a" style="left:0;top:0;width:22px;height:20px;background:#c71d23"></div><svg class="a" style="left:3px;top:2px" width="16" height="16" viewBox="0 0 16 16"><circle cx="8" cy="8" r="7.6" fill="#fff"/><path d="M11.8 7.2H7.6c-.3 0-.5.2-.5.5v1c0 .3.2.5.5.5h2.6c.3 0 .5.2.5.5v.3c0 .8-.7 1.5-1.5 1.5H6.3c-.3 0-.5-.2-.5-.5V6.6c0-.8.7-1.5 1.5-1.5h4.5c.3 0 .5-.2.5-.5v-1c0-.3-.2-.5-.5-.5H7.3C5.3 3.1 3.9 4.6 3.9 6.5v5.2c0 .3.2.5.5.5h5.2c1.7 0 3.1-1.4 3.1-3.1V7.7c0-.3-.2-.5-.5-.5z" fill="#c71d23"/></svg><div class="t" style="left:26px;top:3px;font-size:12.5px;line-height:14px;color:#fff;letter-spacing:0.4px">0 Stars</div></div>
<div class="a" style="left:1583px;top:844px;width:74px;height:20px;background:#2e3440;border-radius:2px;overflow:hidden"><div class="a" style="left:0;top:0;width:22px;height:20px;background:#c71d23"></div><svg class="a" style="left:3px;top:2px" width="16" height="16" viewBox="0 0 16 16"><circle cx="8" cy="8" r="7.6" fill="#fff"/><path d="M11.8 7.2H7.6c-.3 0-.5.2-.5.5v1c0 .3.2.5.5.5h2.6c.3 0 .5.2.5.5v.3c0 .8-.7 1.5-1.5 1.5H6.3c-.3 0-.5-.2-.5-.5V6.6c0-.8.7-1.5 1.5-1.5h4.5c.3 0 .5-.2.5-.5v-1c0-.3-.2-.5-.5-.5H7.3C5.3 3.1 3.9 4.6 3.9 6.5v5.2c0 .3.2.5.5.5h5.2c1.7 0 3.1-1.4 3.1-3.1V7.7c0-.3-.2-.5-.5-.5z" fill="#c71d23"/></svg><div class="t" style="left:26px;top:3px;font-size:12.5px;line-height:14px;color:#fff;letter-spacing:0.4px">0 Forks</div></div>
</body></html>
